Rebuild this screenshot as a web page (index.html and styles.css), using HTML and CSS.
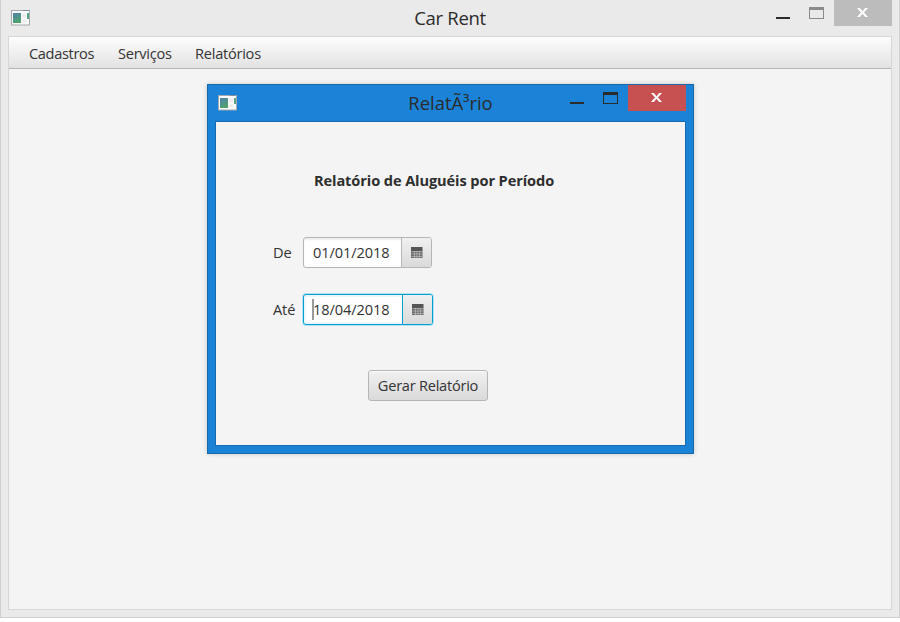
FILE: index.html
```html
<!DOCTYPE html>
<html lang="pt-BR">
<head>
<meta charset="utf-8">
<title>Car Rent</title>
<link rel="stylesheet" href="styles.css">
</head>
<body>
<svg width="0" height="0" class="defs">
  <defs>
    <linearGradient id="pane" x1="0" y1="0" x2="0.4" y2="1">
      <stop offset="0" stop-color="#4f82ac"/><stop offset="1" stop-color="#4fa36d"/>
    </linearGradient>
    <symbol id="app" viewBox="0 0 19 16">
      <rect x="0.5" y="0.5" width="18" height="14.5" fill="#fafafa" stroke="#a3a9ae"/>
      <path d="M12 .5h6" stroke="#7d90a2"/>
      <rect x="2" y="3" width="8" height="10" fill="url(#pane)"/>
      <path d="M11 3.5h4v4h-4zM11 9.500h4v3h-4z" fill="#ececec"/>
      <rect x="16" y="3" width="2" height="6" fill="#5ba584"/>
    </symbol>
    <symbol id="cross" viewBox="0 0 12 10">
      <path d="M0 0h2.800L5.500 3.200 8.200 0H11L7 4.500 11 9H8.200L5.500 5.800 2.800 9H0L4 4.500z" fill="#fff"/>
    </symbol>
    <symbol id="cal" viewBox="0 0 12 12">
      <path d="M0 0h11.500v4H0z" fill="#555"/>
      <path d="M0 4h11.500v7H0z" fill="#6b6b6b"/>
      <path d="M.5 4.500h10.500M.5 7h10.500M.5 9.500h10.500M3.500 4v7M6 4v7M8.500 4v7" stroke="#bdbdbd" stroke-width=".7"/>
    </symbol>
  </defs>
</svg>
<main class="window">
  <header class="titlebar">
    <svg class="app-icon"><use href="#app"/></svg>
    <h1 class="title"><span class="t-main">Car Rent</span></h1>
    <div class="controls">
      <i class="min"></i><i class="max"></i>
      <button class="close" aria-label="Fechar"><svg class="cross"><use href="#cross"/></svg></button>
    </div>
  </header>
  <div class="client">
    <nav class="menubar">
      <span class="m1">Cadastros</span><span class="m2">Serviços</span><span class="m3">Relatórios</span>
    </nav>
  </div>
  <section class="dialog">
    <header class="titlebar">
      <svg class="app-icon"><use href="#app"/></svg>
      <h2 class="title"><span class="t-dialog">RelatÃ³rio</span></h2>
      <div class="controls">
        <i class="min"></i><i class="max"></i>
        <button class="close" aria-label="Fechar"><svg class="cross"><use href="#cross"/></svg></button>
      </div>
    </header>
    <div class="panel">
      <h3 class="heading"><span>Relatório de Aluguéis por Período</span></h3>
      <div class="row">
        <label>De</label>
        <div class="picker"><span class="value">01/01/2018</span><button class="pick" aria-label="Calendário"><svg class="cal"><use href="#cal"/></svg></button></div>
      </div>
      <div class="row">
        <label>Até</label>
        <div class="picker focused"><span class="value">18/04/2018</span><button class="pick" aria-label="Calendário"><svg class="cal"><use href="#cal"/></svg></button></div>
      </div>
      <button class="submit"><span>Gerar Relatório</span></button>
    </div>
  </section>
</main>
</body>
</html>
```
FILE: styles.css
```css
* { box-sizing: border-box; }
body {
  margin: 0;
  background: #fff;
  color: #333;
  font: 14.6px/20px "Open Sans", "Noto Sans", sans-serif;
  overflow: hidden;
}
h1, h2, h3 { margin: 0; font-weight: 400; }
button { border: 0; padding: 0; font: inherit; color: inherit; }
span { white-space: nowrap; }
.defs { position: absolute; }
.window {
  position: relative;
  display: flex;
  flex-direction: column;
  width: 900px;
  height: 618px;
  padding: 0 8px 8px;
  background: #eaeaea;
  box-shadow: inset 1px 0 #d0d0d0, inset -1px -1px #d0d0d0;
}
.titlebar {
  display: grid;
  grid-template-columns: 124px 1fr 124px;
  height: 36px;
  flex: none;
}
.app-icon { width: 19px; height: 16px; margin: 10px 0 0 3px; }
.title {
  text-align: center;
  font-size: 18.5px;
  line-height: 24px;
  padding-top: 6px;
  color: #2b2b2b;
}
.t-main { letter-spacing: -.3px; }
.t-dialog { letter-spacing: -.05px; }
.controls { display: flex; justify-content: flex-end; align-items: flex-start; }
.min { width: 14px; height: 2px; margin: 17px 19px 0 0; background: #2b2b2b; }
.max { width: 15px; height: 12px; margin: 7px 10px 0 0; border: 1px solid #8b8b8b; border-top-width: 3px; }
.close { display: flex; width: 58px; height: 26px; background: #bcbcbc; }
.cross { width: 12px; height: 10px; margin: 8px 0 0 23px; }
.client { flex: 1; border: 1px solid #d7d7d7; background: #f4f4f4; }
.menubar {
  display: flex;
  gap: 24px;
  height: 32px;
  padding: 6px 0 0 20px;
  border-bottom: 1px solid #b5b5b5;
  background: linear-gradient(#fdfdfd, #e2e2e2);
}
.m1 { width: 65px; letter-spacing: -.35px; }
.m2 { width: 53px; letter-spacing: -.27px; }
.m3 { letter-spacing: -.25px; }
.dialog {
  position: absolute;
  left: 207px;
  top: 84px;
  width: 487px;
  height: 370px;
  display: flex;
  flex-direction: column;
  padding: 0 7px 7px;
  border: 1px solid #1769a9;
  background: #1a83d8;
  box-shadow: 0 0 5px rgba(0, 0, 0, .18);
}
.dialog .max { border-color: #2b2b2b; }
.dialog .close { background: #c75050; }
.panel {
  flex: 1;
  display: flex;
  flex-direction: column;
  align-items: flex-start;
  padding: 48px 0 0 57px;
  border: 1px solid #176ab0;
  background: #f4f4f4;
}
.heading { margin-left: 41px; font-weight: 700; font-size: 14.6px; letter-spacing: -.1px; color: #2e2e2e; }
.row { display: flex; align-items: center; height: 31px; margin-top: 26px; letter-spacing: -.15px; }
.heading + .row { margin-top: 47px; }
.row label { width: 30px; padding-bottom: 2px; }
.picker {
  display: flex;
  width: 129px;
  height: 31px;
  border: 1px solid #b5b5b5;
  border-radius: 3px;
  overflow: hidden;
  background: #fff;
  box-shadow: inset 0 2px 2px #eee;
}
.value { width: 98px; padding: 4px 0 0 9px; letter-spacing: -.1px; }
.pick { width: 30px; border-left: 1px solid #b5b5b5; background: linear-gradient(#f0f0f0, #dadada); }
.cal { display: block; width: 12px; height: 12px; margin: 0 0 0 9px; }
.focused { width: 130px; border-color: #039ed3; box-shadow: 0 0 0 1px #b5e1f0, inset 0 0 0 2px #edf7fa; }
.focused .value { position: relative; width: 99px; }
.focused .value::before {
  content: "";
  position: absolute;
  left: 8px;
  top: 4px;
  width: 2px;
  height: 21px;
  background: #999;
}
.focused .pick { border-color: #039ed3; }
.submit {
  width: 120px;
  height: 31px;
  margin: 45px 0 0 95px;
  padding-bottom: 2px;
  border: 1px solid #b5b5b5;
  border-radius: 3px;
  background: linear-gradient(#f0f0f0, #dadada);
  box-shadow: inset 0 1px #fafafa;
  letter-spacing: -.25px;
}
```
